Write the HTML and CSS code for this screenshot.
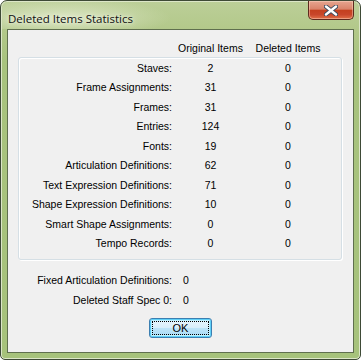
FILE: index.html
```html
<!DOCTYPE html>
<html>
<head>
	<title>Deleted Items Statistics</title>
	<link rel="stylesheet" href="styles.css">
</head>
<body>
	<div class="window">
		<div class="titlebar">
			<span class="title">Deleted Items Statistics</span>
			<div class="closebtn">
				<svg width="14" height="11" viewBox="0 0 14 11">
					<path d="M2 1.5 L12 9.5 M12 1.5 L2 9.5" stroke="#3b4a5e" stroke-width="4.2" stroke-linecap="round"/>
					<path d="M2 1.5 L12 9.5 M12 1.5 L2 9.5" stroke="#ffffff" stroke-width="2.4" stroke-linecap="round"/>
				</svg>
			</div>
		</div>
		<div class="client">
			<div class="grid header">
				<span></span>
				<span class="val">Original Items</span>
				<span class="val">Deleted Items</span>
			</div>
			<div class="groupbox" id="stats"></div>
			<div class="extra">
				<span class="lbl">Fixed Articulation Definitions:</span><span>0</span>
				<span class="lbl">Deleted Staff Spec 0:</span><span>0</span>
			</div>
			<div class="btnrow">
				<div class="okbtn"><span class="focus">OK</span></div>
			</div>
		</div>
	</div>

	<script>
		const rows = [
			["Staves:", 2, 0],
			["Frame Assignments:", 31, 0],
			["Frames:", 31, 0],
			["Entries:", 124, 0],
			["Fonts:", 19, 0],
			["Articulation Definitions:", 62, 0],
			["Text Expression Definitions:", 71, 0],
			["Shape Expression Definitions:", 10, 0],
			["Smart Shape Assignments:", 0, 0],
			["Tempo Records:", 0, 0]
		];
		const place = document.getElementById("stats");
		for (let i = 0; i < rows.length; i++) {
			const row = document.createElement('div');
			row.className = 'grid row';
			row.innerHTML = `<span class="lbl">${rows[i][0]}</span><span class="val">${rows[i][1]}</span><span class="val">${rows[i][2]}</span>`;
			place.append(row);
		}
	</script>
</body>
</html>
```

FILE: styles.css
```css
html, body {
	margin: 0;
	padding: 0;
	background: #ffffff;
}

body {
	font-family: "Liberation Sans", Arial, sans-serif;
	font-size: 10.5px;
	color: #000000;
}

.window {
	width: 361px;
	height: 360px;
	box-sizing: border-box;
	border: 1px solid #3e4a36;
	border-radius: 7px 7px 5px 5px;
	background: linear-gradient(180deg, #bccf98 0px, #b2c889 30px, #a8c37e 60px, #a6c27b 100%);
	box-shadow: inset 0 0 0 1px #dce6c8;
	display: flex;
	flex-direction: column;
}

.titlebar {
	height: 28px;
	display: flex;
	justify-content: space-between;
	align-items: flex-start;
	background: radial-gradient(ellipse 110px 20px at 60px 17px, rgba(226, 234, 204, 0.85), rgba(226, 234, 204, 0) 100%);
}

.title {
	font-family: "Open Sans", "Noto Sans", sans-serif;
	font-size: 11.5px;
	color: #101010;
	margin: 10px 0 0 7px;
	text-shadow: 0 0 6px #eef3e0, 0 0 3px #eef3e0;
}

.closebtn {
	width: 46px;
	height: 19px;
	margin-right: 6px;
	box-sizing: border-box;
	border: 1px solid #5d2a1e;
	border-top: none;
	border-radius: 0 0 5px 5px;
	background: linear-gradient(180deg, #e6a590 0%, #d9836a 45%, #c4401f 52%, #c8462a 75%, #e07048 100%);
	box-shadow: inset 0 0 0 1px rgba(255, 220, 200, 0.45);
	display: flex;
	align-items: center;
	justify-content: center;
}

.client {
	flex: 1;
	margin: 0 6px 6px 6px;
	border: 1px solid #5f6f4e;
	background: #f0f0f0;
	padding: 10px 9px 0 11px;
	display: flex;
	flex-direction: column;
}

.grid {
	display: grid;
	grid-template-columns: 153px 77px 78px;
	align-items: center;
}

.header {
	height: 16px;
}

.val {
	text-align: center;
}

.lbl {
	text-align: right;
}

.groupbox {
	margin-top: 1px;
	border: 1px solid #d5dfe5;
	border-radius: 3px;
	box-shadow: inset 1px 1px 0 #ffffff, 1px 1px 0 #ffffff;
	padding: 0 0 6px 0;
	margin-left: -1px;
	width: 322px;
}

.row {
	height: 19.5px;
}

.extra {
	margin-top: 10px;
	display: grid;
	grid-template-columns: 153px auto;
	column-gap: 11px;
	grid-auto-rows: 20px;
	align-items: center;
}

.btnrow {
	display: flex;
	justify-content: center;
	margin-top: 8px;
	padding-right: 2px;
}

.okbtn {
	width: 63px;
	height: 20px;
	box-sizing: border-box;
	border: 1px solid #3c7fb1;
	border-radius: 3px;
	background: linear-gradient(180deg, #e9f5fc 0%, #d9effb 48%, #bee5f9 52%, #a7d9f5 100%);
	box-shadow: inset 0 0 0 1px #5fd0f7, inset 0 0 0 2px #bff0ff;
	display: flex;
	padding: 2px;
}

.focus {
	flex: 1;
	border: 1px dotted #000000;
	display: flex;
	align-items: center;
	justify-content: center;
	font-size: 11px;
}
```
